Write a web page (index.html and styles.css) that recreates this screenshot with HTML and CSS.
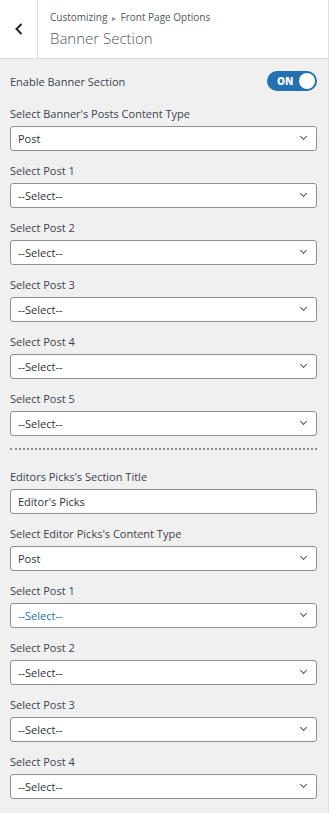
FILE: index.html
```html
<!DOCTYPE html>
<html lang="en">
<head>
  <title>Banner Section</title>
  <meta charset="utf-8">
  <meta name="viewport" content="width=device-width, initial-scale=1">
  <link rel="stylesheet" href="styles.css">
</head>
<body>
  <div class="panel">
    <header class="header">
      <button class="back" aria-label="Back">
        <svg width="10" height="14" viewBox="0 0 10 14"><path d="M7.5 2 L2.5 7 L7.5 12" fill="none" stroke="#1d2327" stroke-width="2"/></svg>
      </button>
      <div class="title">
        <span class="crumbs">Customizing <span class="arrow">&#9656;</span> Front Page Options</span>
        <h3>Banner Section</h3>
      </div>
    </header>

    <div class="controls">
      <div class="toggle-row">
        <span class="label">Enable Banner Section</span>
        <span class="switch"><b>ON</b><i></i></span>
      </div>

      <div class="control">
        <span class="label">Select Banner's Posts Content Type</span>
        <div class="select">Post</div>
      </div>
      <div class="control">
        <span class="label">Select Post 1</span>
        <div class="select">--Select--</div>
      </div>
      <div class="control">
        <span class="label">Select Post 2</span>
        <div class="select">--Select--</div>
      </div>
      <div class="control">
        <span class="label">Select Post 3</span>
        <div class="select">--Select--</div>
      </div>
      <div class="control">
        <span class="label">Select Post 4</span>
        <div class="select">--Select--</div>
      </div>
      <div class="control">
        <span class="label">Select Post 5</span>
        <div class="select">--Select--</div>
      </div>

      <hr class="divider">

      <div class="control">
        <span class="label">Editors Picks's Section Title</span>
        <div class="input">Editor's Picks</div>
      </div>
      <div class="control">
        <span class="label">Select Editor Picks's Content Type</span>
        <div class="select">Post</div>
      </div>
      <div class="control">
        <span class="label">Select Post 1</span>
        <div class="select active">--Select--</div>
      </div>
      <div class="control">
        <span class="label">Select Post 2</span>
        <div class="select">--Select--</div>
      </div>
      <div class="control">
        <span class="label">Select Post 3</span>
        <div class="select">--Select--</div>
      </div>
      <div class="control">
        <span class="label">Select Post 4</span>
        <div class="select">--Select--</div>
      </div>
    </div>
  </div>
</body>
</html>
```

FILE: styles.css
```css
*, *::before, *::after {
  margin: 0;
  padding: 0;
  box-sizing: border-box;
}

body {
  min-height: 100vh;
  background-color: #ffffff;
  color: #3c434a;
  font-family: "Open Sans", sans-serif;
  font-size: 11px;
}

.panel {
  width: 329px;
  min-height: 813px;
  border-right: 1px solid #dcdcde;
  background-color: #f0f0f1;
}

.header {
  display: flex;
  height: 59px;
  border-bottom: 1px solid #dcdcde;
  background-color: #ffffff;
}

.back {
  display: flex;
  align-items: center;
  justify-content: center;
  width: 38px;
  border: none;
  border-right: 1px solid #dcdcde;
  background: none;
}

.title {
  display: flex;
  flex-direction: column;
  padding: 10px 0 0 12px;
}

.crumbs {
  font-size: 10px;
  line-height: 14px;
  color: #50575e;
}

.arrow {
  font-size: 8px;
  color: #8c8f94;
  margin: 0 2px;
}

.title h3 {
  margin-top: 3px;
  font-size: 15px;
  font-weight: 300;
  line-height: 20px;
  color: #50575e;
}

.controls {
  padding: 12px 11px 0 10px;
}

.toggle-row {
  display: flex;
  align-items: center;
  justify-content: space-between;
  height: 20px;
  margin-bottom: 15px;
}

.label {
  display: block;
  font-size: 11px;
  line-height: 15px;
  color: #3c434a;
}

.switch {
  display: flex;
  align-items: center;
  justify-content: space-between;
  width: 50px;
  height: 20px;
  padding: 0 2px 0 10px;
  border-radius: 10px;
  background-color: #2271b1;
  color: #ffffff;
  font-size: 10px;
  font-weight: 700;
}

.switch i {
  width: 16px;
  height: 16px;
  border-radius: 50%;
  background-color: #ffffff;
}

.control {
  margin-bottom: 12px;
}

.control .label {
  margin-bottom: 5px;
}

.select, .input {
  position: relative;
  height: 25px;
  padding-left: 7px;
  border: 1px solid #8c8f94;
  border-radius: 3px;
  background-color: #ffffff;
  color: #2c3338;
  font-size: 11px;
  line-height: 23px;
}

.select::after {
  content: "";
  position: absolute;
  top: 7px;
  right: 10px;
  width: 5px;
  height: 5px;
  border-right: 1.2px solid #50575e;
  border-bottom: 1.2px solid #50575e;
  transform: rotate(45deg);
}

.select.active {
  color: #2271b1;
}

.divider {
  height: 0;
  margin: 3px 0 19px;
  border: none;
  border-top: 2px dotted #8c8f94;
}
```
